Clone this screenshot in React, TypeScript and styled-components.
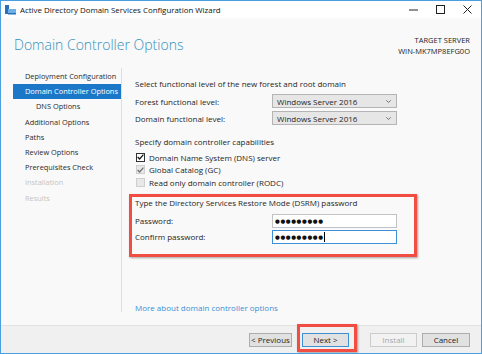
import React, { FC } from "react";
import styled, { createGlobalStyle, css } from "styled-components";

const GlobalStyle = createGlobalStyle`
    html, body {
        margin: 0;
        padding: 0;
        background: #ffffff;
    }
    * {
        box-sizing: border-box;
    }
`

const WindowFrame = styled.div`
    width: 482px;
    height: 354px;
    display: flex;
    flex-direction: column;
    border: 1px solid #4a9fe0;
    background: #f9f9f9;
    font-family: "Segoe UI", "Open Sans", sans-serif;
    font-size: 8px;
    color: #1e1e1e;
    overflow: hidden;
`

const TitleBar = styled.div`
    height: 17px;
    flex-shrink: 0;
    display: flex;
    align-items: center;
    background: #ffffff;
    padding-left: 4px;
`

const TitleText = styled.div`
    margin-left: 4px;
    font-size: 7.9px;
    color: #111111;
`

const WindowControls = styled.div`
    margin-left: auto;
    display: flex;
    align-items: center;
    height: 100%;
`

const ControlButton = styled.div`
    width: 27px;
    height: 100%;
    display: flex;
    align-items: center;
    justify-content: center;
`

const Header = styled.div`
    height: 50px;
    flex-shrink: 0;
    display: flex;
    justify-content: space-between;
    padding: 17px 11px 0 13px;
`

const PageTitle = styled.div`
    font-size: 14px;
    font-weight: 300;
    color: #3590bb;
    line-height: 20px;
`

const TargetServer = styled.div`
    text-align: right;
    font-size: 7.5px;
    line-height: 11px;
    color: #1e1e1e;
`

const Body = styled.div`
    flex: 1;
    display: flex;
    min-height: 0;
`

const Nav = styled.div`
    width: 121px;
    flex-shrink: 0;
    padding: 1px 0 0 12px;
    margin-bottom: 13px;
    border-right: 1px solid #dedede;
`

const NavItem = styled.div<{ $selected?: boolean; $sub?: boolean; $disabled?: boolean }>`
    height: 15.2px;
    line-height: 15.2px;
    padding-left: ${(props) => (props.$sub ? "23px" : "12px")};
    white-space: nowrap;
    font-size: 7.4px;
    color: ${(props) => (props.$disabled ? "#c4c4c4" : "#2a2a2a")};
    ${(props) =>
        props.$selected &&
        css`
            background: #1b78c9;
            color: #ffffff;
        `}
`

const Content = styled.div`
    flex: 1;
    display: flex;
    flex-direction: column;
    padding: 10px 0 11px 13px;
`

const Line = styled.div<{ $top?: string }>`
    height: 12px;
    line-height: 12px;
    margin-top: ${(props) => props.$top || "0"};
    white-space: nowrap;
`

const FieldRow = styled.div<{ $top?: string }>`
    display: flex;
    align-items: center;
    height: 14px;
    margin-top: ${(props) => props.$top || "0"};
`

const FieldLabel = styled.div`
    width: 137px;
    flex-shrink: 0;
    white-space: nowrap;
`

const Select = styled.div`
    width: 125px;
    height: 14px;
    display: flex;
    align-items: center;
    padding: 0 5px 0 4px;
    background: #e6e6e6;
    border: 1px solid #b4b4b4;
`

const Chevron = styled.span`
    margin-left: auto;
    display: flex;
`

const CheckList = styled.div`
    margin-top: 3px;
    display: flex;
    flex-direction: column;
`

const CheckRow = styled.div`
    display: flex;
    align-items: center;
    height: 12.5px;
`

const CheckBox = styled.div<{ $disabled?: boolean }>`
    width: 9px;
    height: 9px;
    margin: 0 4px 0 1px;
    display: flex;
    align-items: center;
    justify-content: center;
    border: 1px solid ${(props) => (props.$disabled ? "#cfcfcf" : "#333333")};
    background: ${(props) => (props.$disabled ? "#e8e8e8" : "#ffffff")};
`

const DsrmGroup = styled.div`
    position: relative;
    width: 262px;
    margin-top: 8px;
    &::after {
        content: "";
        position: absolute;
        top: -3px;
        left: -6px;
        right: -20px;
        bottom: -13px;
        border: 3px solid #f24d43;
        box-shadow: 1px 1px 2px rgba(0, 0, 0, 0.35);
        pointer-events: none;
    }
`

const PasswordBox = styled.div<{ $focused?: boolean }>`
    width: 125px;
    height: 14px;
    display: flex;
    align-items: center;
    padding-left: 2px;
    background: #ffffff;
    border: 1px solid ${(props) => (props.$focused ? "#3c8fd8" : "#c2c2c2")};
`

const Dots = styled.span`
    font-family: "DejaVu Sans", sans-serif;
    font-size: 5.5px;
    letter-spacing: 0.6px;
    color: #111111;
`

const Caret = styled.span`
    width: 1px;
    height: 10px;
    background: #000000;
`

const MoreLink = styled.div`
    margin-top: auto;
    height: 12px;
    line-height: 12px;
    color: #3a8fd6;
`

const Footer = styled.div`
    height: 28px;
    flex-shrink: 0;
    display: flex;
    align-items: center;
    justify-content: flex-end;
    padding: 0 11px 0 0;
    background: #f0f0f0;
    border-top: 1px solid #e2e2e2;
`

const Button = styled.div<{ $width: number; $gap: number; $primary?: boolean; $disabled?: boolean; $marked?: boolean }>`
    position: relative;
    width: ${(props) => props.$width}px;
    height: 14px;
    margin-left: ${(props) => props.$gap}px;
    display: flex;
    align-items: center;
    justify-content: center;
    font-size: 8px;
    background: ${(props) => (props.$disabled ? "#f2f2f2" : "#e1e1e1")};
    color: ${(props) => (props.$disabled ? "#a8a8a8" : "#1e1e1e")};
    border: 1px solid
        ${(props) => (props.$primary ? "#3f8fd8" : props.$disabled ? "#cccccc" : "#adadad")};
    ${(props) =>
        props.$marked &&
        css`
            &::after {
                content: "";
                position: absolute;
                top: -10px;
                left: -6px;
                right: -9px;
                bottom: -6px;
                border: 3px solid #f24d43;
                box-shadow: 1px 1px 2px rgba(0, 0, 0, 0.35);
            }
        `}
`

const AppIcon: FC = () => (
    <svg width="11" height="10" viewBox="0 0 11 10">
        <rect x="0" y="0" width="4" height="9" fill="#2a6fb8" />
        <rect x="3" y="4" width="8" height="5" fill="#6bb0e6" />
        <rect x="3" y="8" width="8" height="1.5" fill="#2a6fb8" />
    </svg>
)

const SelectChevron: FC = () => (
    <Chevron>
        <svg width="5" height="3" viewBox="0 0 5 3">
            <path d="M0.3 0.3 L2.5 2.5 L4.7 0.3" fill="none" stroke="#555" strokeWidth="0.8" />
        </svg>
    </Chevron>
)

const navItems = [
    { label: "Deployment Configuration" },
    { label: "Domain Controller Options", selected: true },
    { label: "DNS Options", sub: true },
    { label: "Additional Options" },
    { label: "Paths" },
    { label: "Review Options" },
    { label: "Prerequisites Check" },
    { label: "Installation", disabled: true },
    { label: "Results", disabled: true },
]

const capabilities = [
    { label: "Domain Name System (DNS) server", checked: true },
    { label: "Global Catalog (GC)", checked: true, disabled: true },
    { label: "Read only domain controller (RODC)", disabled: true },
]

const App: FC = () => {
    return (
        <>
            <GlobalStyle />
            <WindowFrame>
                <TitleBar>
                    <AppIcon />
                    <TitleText>Active Directory Domain Services Configuration Wizard</TitleText>
                    <WindowControls>
                        <ControlButton>
                            <svg width="9" height="9" viewBox="0 0 9 9">
                                <line x1="0" y1="5" x2="9" y2="5" stroke="#222" strokeWidth="1" />
                            </svg>
                        </ControlButton>
                        <ControlButton>
                            <svg width="9" height="9" viewBox="0 0 9 9">
                                <rect x="0.5" y="0.5" width="8" height="8" fill="none" stroke="#222" strokeWidth="1" />
                            </svg>
                        </ControlButton>
                        <ControlButton>
                            <svg width="9" height="9" viewBox="0 0 9 9">
                                <path d="M0.5 0.5 L8.5 8.5 M8.5 0.5 L0.5 8.5" stroke="#222" strokeWidth="1" />
                            </svg>
                        </ControlButton>
                    </WindowControls>
                </TitleBar>

                <Header>
                    <PageTitle>Domain Controller Options</PageTitle>
                    <TargetServer>
                        TARGET SERVER
                        <br />
                        WIN-MK7MP8EFG0O
                    </TargetServer>
                </Header>

                <Body>
                    <Nav>
                        {navItems.map((item) => (
                            <NavItem
                                key={item.label}
                                $selected={item.selected}
                                $sub={item.sub}
                                $disabled={item.disabled}
                            >
                                {item.label}
                            </NavItem>
                        ))}
                    </Nav>

                    <Content>
                        <Line>Select functional level of the new forest and root domain</Line>
                        <FieldRow $top="4px">
                            <FieldLabel>Forest functional level:</FieldLabel>
                            <Select>
                                Windows Server 2016
                                <SelectChevron />
                            </Select>
                        </FieldRow>
                        <FieldRow $top="3px">
                            <FieldLabel>Domain functional level:</FieldLabel>
                            <Select>
                                Windows Server 2016
                                <SelectChevron />
                            </Select>
                        </FieldRow>
                        <Line $top="11px">Specify domain controller capabilities</Line>
                        <CheckList>
                            {capabilities.map((cap) => (
                                <CheckRow key={cap.label}>
                                    <CheckBox $disabled={cap.disabled}>
                                        {cap.checked && (
                                            <svg width="7" height="6" viewBox="0 0 7 6">
                                                <path
                                                    d="M0.6 3 L2.6 5 L6.4 0.6"
                                                    fill="none"
                                                    stroke={cap.disabled ? "#6f6f6f" : "#111"}
                                                    strokeWidth="1.2"
                                                />
                                            </svg>
                                        )}
                                    </CheckBox>
                                    {cap.label}
                                </CheckRow>
                            ))}
                        </CheckList>

                        <DsrmGroup>
                            <Line>Type the Directory Services Restore Mode (DSRM) password</Line>
                            <FieldRow $top="5px">
                                <FieldLabel>Password:</FieldLabel>
                                <PasswordBox>
                                    <Dots>●●●●●●●●●</Dots>
                                </PasswordBox>
                            </FieldRow>
                            <FieldRow $top="2px">
                                <FieldLabel>Confirm password:</FieldLabel>
                                <PasswordBox $focused>
                                    <Dots>●●●●●●●●●</Dots>
                                    <Caret />
                                </PasswordBox>
                            </FieldRow>
                        </DsrmGroup>

                        <MoreLink>More about domain controller options</MoreLink>
                    </Content>
                </Body>

                <Footer>
                    <Button $width={43} $gap={0}>&lt; Previous</Button>
                    <Button $width={47} $gap={10} $primary $marked>Next &gt;</Button>
                    <Button $width={47} $gap={21} $disabled>Install</Button>
                    <Button $width={48} $gap={5}>Cancel</Button>
                </Footer>
            </WindowFrame>
        </>
    )
}

export default App
